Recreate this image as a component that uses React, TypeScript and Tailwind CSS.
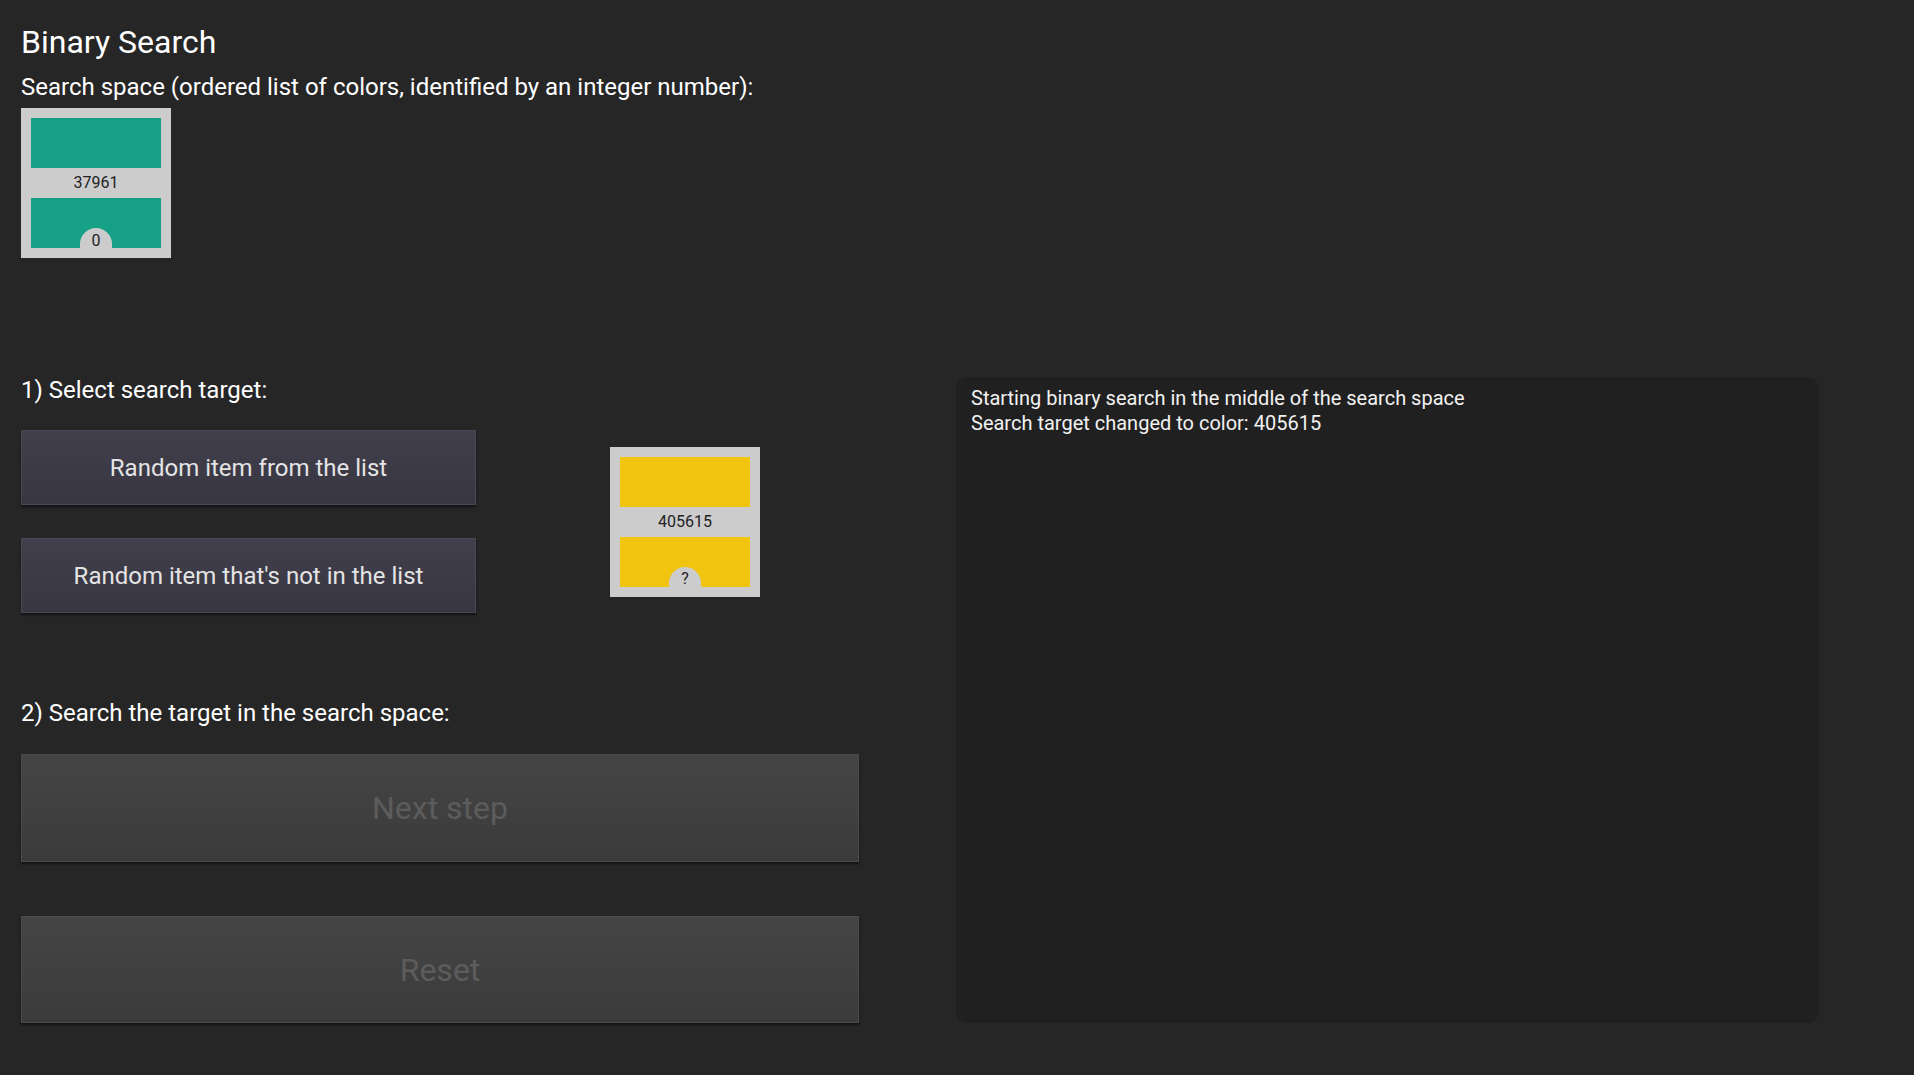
import React from 'react';

type ColorCardProps = { color: string; label: string; badge: string };

const ColorCard: React.FC<ColorCardProps> = ({ color, label, badge }) => (
  <div className="w-[150px] h-[150px] bg-[#cccccc] p-[10px] flex flex-col">
    <div className="h-[50px]" style={{ backgroundColor: color }}></div>
    <div className="h-[30px] flex items-center justify-center text-[16px] text-[#222222]">{label}</div>
    <div className="h-[50px] flex items-end justify-center" style={{ backgroundColor: color }}>
      <div className="w-[32px] h-[20px] bg-[#cccccc] rounded-t-full flex items-center justify-center text-[16px] leading-none text-[#222222] pt-[5px]">
        {badge}
      </div>
    </div>
  </div>
);

const App: React.FC = () => {
  return (
    <div
      className="min-h-screen bg-[#262626] text-white px-[21px] pt-[23px]"
      style={{ fontFamily: 'Roboto, "Liberation Sans", sans-serif' }}
    >
      <h1 className="text-[32px] leading-[38px] font-normal">Binary Search</h1>
      <p className="mt-[12px] text-[24px] leading-[28px]">
        Search space (ordered list of colors, identified by an integer number):
      </p>
      <div className="mt-[7px]">
        <ColorCard color="#16a085" label="37961" badge="0" />
      </div>

      <div className="mt-[119px] flex gap-[97px]">
        {/* controls */}
        <div className="w-[838px] flex flex-col">
          <p className="text-[24px] leading-[26px]">1) Select search target:</p>
          <div className="mt-[27px] flex items-center gap-[134px]">
            <div className="flex flex-col gap-[33px]">
              <button className="w-[455px] h-[75px] bg-gradient-to-b from-[#413f4c] to-[#383641] border border-[#4a4856] shadow-[0_2px_2px_rgba(0,0,0,0.5)] text-[24px] text-[#e4e4e4]">
                Random item from the list
              </button>
              <button className="w-[455px] h-[75px] bg-gradient-to-b from-[#413f4c] to-[#383641] border border-[#4a4856] shadow-[0_2px_2px_rgba(0,0,0,0.5)] text-[24px] text-[#e4e4e4]">
                Random item that's not in the list
              </button>
            </div>
            <ColorCard color="#f1c40f" label="405615" badge="?" />
          </div>

          <p className="mt-[87px] text-[24px] leading-[26px]">2) Search the target in the search space:</p>
          <button className="mt-[28px] w-full h-[108px] bg-gradient-to-b from-[#454545] to-[#3b3b3b] border border-[#4c4c4c] shadow-[0_2px_2px_rgba(0,0,0,0.5)] text-[32px] text-[#5c5c5c]">
            Next step
          </button>
          <button className="mt-[54px] w-full h-[107px] bg-gradient-to-b from-[#454545] to-[#3b3b3b] border border-[#4c4c4c] shadow-[0_2px_2px_rgba(0,0,0,0.5)] text-[32px] text-[#5c5c5c]">
            Reset
          </button>
        </div>

        {/* log */}
        <div className="w-[863px] h-[646px] bg-[#202020] rounded-[12px] px-[15px] pt-[9px] text-[20px] leading-[25px] text-[#f2f2f2]">
          <p>Starting binary search in the middle of the search space</p>
          <p>Search target changed to color: 405615</p>
        </div>
      </div>
    </div>
  );
};

export default App;
